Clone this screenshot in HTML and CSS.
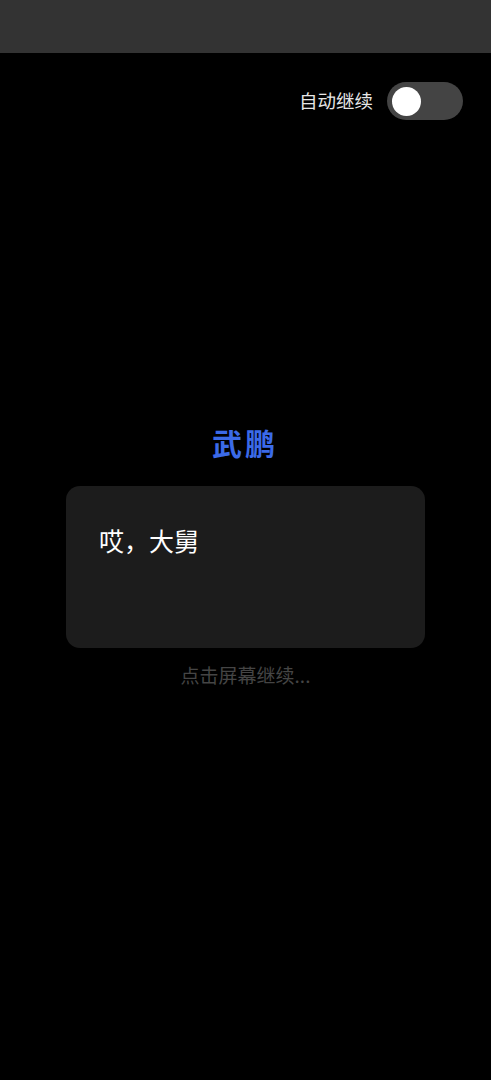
FILE: index.html
```html
<!DOCTYPE html>
<html lang="zh">
<head>
<meta charset="utf-8">
<link rel="stylesheet" href="styles.css">
</head>
<body>
<div class="topbar"></div>
<div class="controls">
  <span class="auto-label">自动继续</span>
  <div class="toggle"><div class="knob"></div></div>
</div>
<main class="stage">
  <div class="speaker">武鹏</div>
  <div class="dialog">哎，大舅</div>
  <div class="hint">点击屏幕继续...</div>
</main>
</body>
</html>
```
FILE: styles.css
```css
html, body {
  margin: 0;
  padding: 0;
  background: #000;
  font-family: "Noto Sans CJK SC", "Noto Sans", sans-serif;
  width: 491px;
  height: 1080px;
  overflow: hidden;
}
.topbar {
  height: 53px;
  background: #333333;
}
.controls {
  display: flex;
  justify-content: flex-end;
  align-items: center;
  gap: 14px;
  padding: 29px 28px 0 0;
  height: 38px;
}
.auto-label {
  color: #e6e6e6;
  font-size: 18.5px;
  line-height: 38px;
  margin-top: -2px;
}
.toggle {
  width: 76px;
  height: 38px;
  border-radius: 19px;
  background: #444444;
  display: flex;
  align-items: center;
  padding-left: 5px;
  box-sizing: border-box;
}
.knob {
  width: 29px;
  height: 29px;
  border-radius: 50%;
  background: #ffffff;
}
.stage {
  display: flex;
  flex-direction: column;
  align-items: center;
  padding-top: 302px;
}
.speaker {
  color: #3b6ae8;
  font-size: 30px;
  font-weight: 700;
  line-height: 40px;
  letter-spacing: 3px;
  padding-left: 3px;
  margin-left: -4px;
}
.dialog {
  margin-top: 24px;
  width: 359px;
  height: 162px;
  box-sizing: border-box;
  background: #1c1c1c;
  border-radius: 14px;
  padding: 36px 33px;
  color: #ffffff;
  font-size: 25px;
  line-height: 36px;
  align-self: flex-start;
  margin-left: 66px;
}
.hint {
  margin-top: 14px;
  color: #454545;
  font-size: 19px;
  line-height: 26px;
}
```
